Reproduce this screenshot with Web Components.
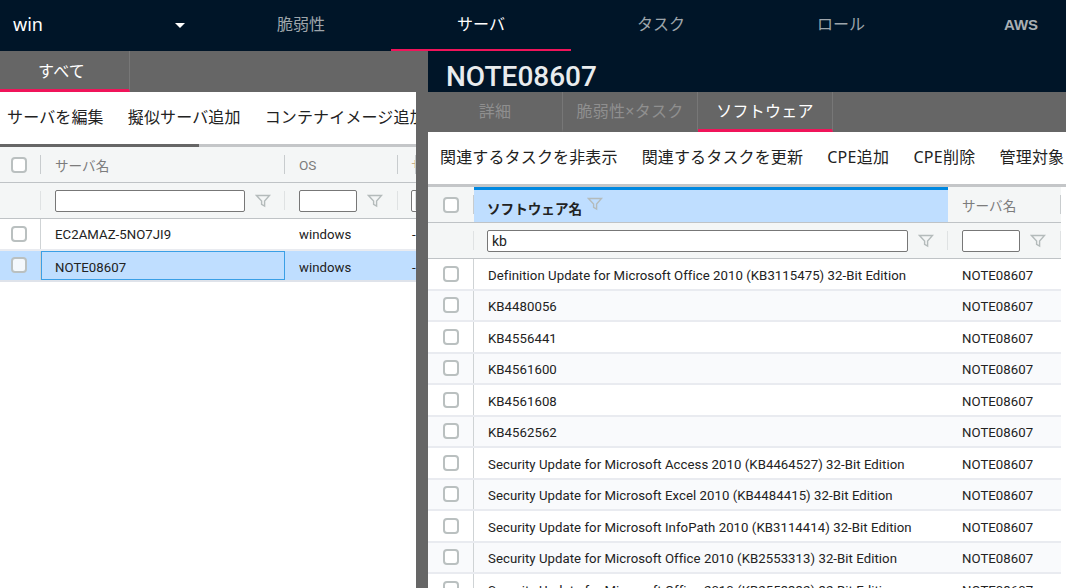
<!DOCTYPE html>
<html lang="ja">
<head>
<meta charset="utf-8">
<title>NOTE08607</title>
<style>
html, body { margin: 0; height: 100%; overflow: hidden; }
body {
    font-family: "Noto Sans", "Noto Sans CJK JP", sans-serif;
    background: #666;
    color: #222;
}
.page { display: flex; flex-direction: column; width: 1066px; height: 588px; overflow: hidden; }
.panes { display: flex; flex: 1; min-height: 0; }
</style>
</head>
<body>
<div class="page">
    <app-header></app-header>
    <div class="panes">
        <server-pane></server-pane>
        <detail-pane></detail-pane>
    </div>
</div>

<script>
const FUNNEL = `<svg width="16" height="14" viewBox="0 0 16 14" fill="none" stroke="#b4bbbb" stroke-width="1.4">
    <path d="M1.5 1.5h13L9.6 7v5l-3-1.6V7z"/></svg>`;

class GridCheck extends HTMLElement {
    constructor() {
        super();
        this.attachShadow({mode: 'open'}).innerHTML = `<style>
            :host { display: block; width: 16px; height: 16px; box-sizing: border-box; flex: none;
                border: 2px solid #bac0c0; border-radius: 4px; background: #fff; }
        </style>`;
    }
}
customElements.define('grid-check', GridCheck);

class AppHeader extends HTMLElement {
    constructor() {
        super();
        const items = ['脆弱性', 'サーバ', 'タスク', 'ロール', 'AWS'];
        this.attachShadow({mode: 'open'}).innerHTML = `<style>
            :host { display: flex; height: 51px; background: #001528; flex: none; overflow: hidden; }
            .pick { width: 211px; flex: none; box-sizing: border-box; padding: 0 26px 4px 13px; display: flex;
                align-items: center; justify-content: space-between; color: #fff; font-size: 18px; }
            .pick i { width: 0; height: 0; border: 5.5px solid transparent; border-top: 5.5px solid #fff;
                border-bottom: 0; margin-top: 4px; }
            .item { width: 180px; flex: none; box-sizing: border-box; display: flex; align-items: center;
                justify-content: center; color: #9ea5ab; font-size: 16px; padding-bottom: 3px;
                border-bottom: 2px solid transparent; }
            .item.on { color: #fff; border-bottom-color: #f0145a; }
            .item.aws { font: 700 15px "Liberation Sans", sans-serif; color: #a9afb4; padding-bottom: 1px; }
        </style>
        <div class="pick"><span>win</span><i></i></div>
        ${items.map((t, i) => `<div class="item ${i === 1 ? 'on' : ''} ${t === 'AWS' ? 'aws' : ''}">${t}</div>`).join('')}`;
    }
}
customElements.define('app-header', AppHeader);

class TabBar extends HTMLElement {
    constructor() {
        super();
        this.attachShadow({mode: 'open'});
    }
    connectedCallback() {
        const w = this.getAttribute('tab-width');
        const on = this.getAttribute('active');
        const tabs = this.getAttribute('tabs').split(',');
        this.shadowRoot.innerHTML = `<style>
            :host { display: flex; height: ${this.getAttribute('h') || 40}px; background: #666; flex: none; }
            .tab { width: ${w}px; box-sizing: border-box; display: flex; align-items: center; justify-content: center;
                color: #8f8f8f; font-size: 16px; letter-spacing: .25px; border-right: 1px solid #777;
                border-bottom: 3px solid transparent; padding: ${this.getAttribute('tab-pad') || '0'}; }
            .tab.on { color: #fff; border-bottom-color: #f0145a; }
        </style>
        ${tabs.map(t => `<div class="tab ${t === on ? 'on' : ''}">${t}</div>`).join('')}`;
    }
}
customElements.define('tab-bar', TabBar);

class ToolBar extends HTMLElement {
    constructor() {
        super();
        this.attachShadow({mode: 'open'}).innerHTML = `<style>
            :host { display: block; flex: none; overflow: hidden; background: #fff; }
            .items { display: flex; gap: 24px; height: ${this.getAttribute('h')}px; align-items: center;
                white-space: nowrap; padding: 0 0 4px ${this.getAttribute('pad')}px; font-size: 16px;
                letter-spacing: .15px; box-sizing: border-box; color: #222; }
            .track { height: 3px; background: #c4c6c8; }
            .thumb { height: 3px; background: #666; width: ${this.getAttribute('thumb') || 0}px; }
        </style>
        <div class="items"><slot></slot></div>
        <div class="track"><div class="thumb"></div></div>`;
    }
}
customElements.define('tool-bar', ToolBar);

class DataGrid extends HTMLElement {
    constructor() {
        super();
        this.attachShadow({mode: 'open'});
    }
    set config(c) {
        const tpl = c.cols.map(col => col.w + 'px').join(' ');
        const check = `<div class="cell sep" style="padding-left:${c.checkPad}px"><grid-check></grid-check></div>`;
        const head = c.cols.map(col => {
            if (col.check) return check;
            const cls = col.sorted ? 'sorted' : '';
            return `<div class="cell name sep ${cls} ${col.warn ? 'warn' : ''}">${col.label}${col.sorted ? `<span class="fn">${FUNNEL}</span>` : ''}</div>`;
        }).join('');
        const filter = c.cols.map(col => {
            if (col.check) return `<div class="cell sep"></div>`;
            return `<div class="cell sep ${col.sorted || col.warn ? 'tight' : ''}"><input value="${col.filter || ''}" style="width:${col.input}px">${FUNNEL}</div>`;
        }).join('');
        const rows = c.rows.map((r, ri) => `<div class="row body ${ri % 2 ? 'odd' : ''} ${r.sel ? 'sel' : ''}">
            ${c.cols.map((col, i) => col.check
                ? check
                : `<div class="cell txt ${r.sel && i === 1 ? 'focus' : ''}">${r.cells[i - 1]}</div>`).join('')}
        </div>`).join('');
        this.shadowRoot.innerHTML = `<style>
            :host { display: block; flex: 1; min-height: 0; overflow: hidden; background: #fff; font-size: 13.6px;
                font-family: Roboto, "Noto Sans CJK JP", sans-serif; }
            .row { display: grid; grid-template-columns: ${tpl}; width: max-content; }
            .head, .filter { height: 36px; box-sizing: border-box; background: #f4f6f6; border-bottom: 1px solid #bfc3c6; }
            .cell { display: flex; align-items: center; box-sizing: border-box; padding-left: 14px; min-width: 0; white-space: nowrap;
                position: relative; overflow: hidden; }
            .head .sep::after, .filter .sep::after { content: ""; position: absolute; right: 0; top: 8px; bottom: 8px;
                width: 1px; background: #c8ccce; }
            .filter .sep::after { background: #dfe2e3; }
            .name { color: #7c7c7c; padding-top: 1px; }
            .warn { color: #c9b08a; padding-left: 13px; }
            .tight { padding-left: 13px; }
            .sorted { background: #bfdeff; border-top: 3px solid #0088e0; color: #222; font-weight: 700;
                align-items: flex-start; padding: 8px 0 0 13px; }
            .fn { margin: -1px 0 0 5px; }
            .sorted::after { display: none; }
            input { box-sizing: border-box; height: 22px; margin: 0 10px 0 0; padding: 0 4px; border: 1px solid #777;
                border-radius: 2px; font: 14px Roboto, sans-serif; color: #222; background: #fff; outline: none; flex: none; }
            .body { height: 31.5px; box-sizing: border-box; border-bottom: 2px solid #e9ebf0; }
            .body.odd { background: #f9fafc; }
            .body .cell:first-child { border-right: 1px solid #cfd3d5; }
            .body.sel { background: #bfdeff; border-bottom-color: #dfe3ea; }
            .body.sel grid-check { background: #f4f8fc; }
            .txt { color: #222; font-size: 13.2px; letter-spacing: .05px; padding-top: ${c.txtPad}px; }
            .sel .txt { padding-top: 5px; }
            .focus { border: 1px solid #3a9fe6; padding-left: 13px; }
        </style>
        <div class="row head">${head}</div>
        <div class="row filter">${filter}</div>
        ${rows}`;
    }
}
customElements.define('data-grid', DataGrid);

class ServerPane extends HTMLElement {
    constructor() {
        super();
        this.attachShadow({mode: 'open'}).innerHTML = `<style>
            :host { display: flex; flex-direction: column; width: 428px; flex: none; background: #666; min-height: 0; }
            .body { flex: 1; width: 416px; display: flex; flex-direction: column; min-height: 0; background: #fff; }
            span { flex: none; }
        </style>
        <tab-bar tabs="すべて" active="すべて" tab-width="130" h="41" tab-pad="0 6px 0 0"></tab-bar>
        <div class="body">
            <tool-bar h="52" pad="7" thumb="199">
                <span>サーバを編集</span><span>擬似サーバ追加</span><span>コンテナイメージ追加</span>
            </tool-bar>
            <data-grid></data-grid>
        </div>`;
        this.shadowRoot.querySelector('data-grid').config = {
            checkPad: 11,
            txtPad: 1,
            cols: [
                {check: true, w: 41},
                {label: 'サーバ名', w: 244, input: 190},
                {label: 'OS', w: 113, input: 58},
                {label: 'サ', w: 18, input: 60, warn: true}
            ],
            rows: [
                {cells: ['EC2AMAZ-5NO7JI9', 'windows', '-']},
                {cells: ['NOTE08607', 'windows', '-'], sel: true}
            ]
        };
    }
}
customElements.define('server-pane', ServerPane);

class DetailPane extends HTMLElement {
    constructor() {
        super();
        this.attachShadow({mode: 'open'}).innerHTML = `<style>
            :host { display: flex; flex-direction: column; flex: 1; min-width: 0; min-height: 0; background: #fff; }
            h1 { margin: 0; height: 41px; flex: none; background: #001528; color: #e9ecee; font: 500 28px/52px Roboto, sans-serif;
                padding-left: 18px; overflow: hidden; }
            span { flex: none; }
            .cpe { letter-spacing: .3px; }
        </style>
        <h1>NOTE08607</h1>
        <tab-bar tabs="詳細,脆弱性×タスク,ソフトウェア" active="ソフトウェア" tab-width="135" tab-pad="0 0 2px"></tab-bar>
        <tool-bar h="52" pad="12">
            <span>関連するタスクを非表示</span><span>関連するタスクを更新</span><span class="cpe">CPE追加</span><span class="cpe">CPE削除</span><span>管理対象</span>
        </tool-bar>
        <data-grid></data-grid>`;
        const names = [
            'Definition Update for Microsoft Office 2010 (KB3115475) 32-Bit Edition',
            'KB4480056', 'KB4556441', 'KB4561600', 'KB4561608', 'KB4562562',
            'Security Update for Microsoft Access 2010 (KB4464527) 32-Bit Edition',
            'Security Update for Microsoft Excel 2010 (KB4484415) 32-Bit Edition',
            'Security Update for Microsoft InfoPath 2010 (KB3114414) 32-Bit Edition',
            'Security Update for Microsoft Office 2010 (KB2553313) 32-Bit Edition',
            'Security Update for Microsoft Office 2010 (KB2553332) 32-Bit Edition'
        ];
        this.shadowRoot.querySelector('data-grid').config = {
            checkPad: 15,
            txtPad: 3,
            cols: [
                {check: true, w: 46},
                {label: 'ソフトウェア名', w: 474, input: 421, filter: 'kb', sorted: true},
                {label: 'サーバ名', w: 113, input: 58}
            ],
            rows: names.map(n => ({cells: [n, 'NOTE08607']}))
        };
    }
}
customElements.define('detail-pane', DetailPane);
</script>
</body>
</html>
